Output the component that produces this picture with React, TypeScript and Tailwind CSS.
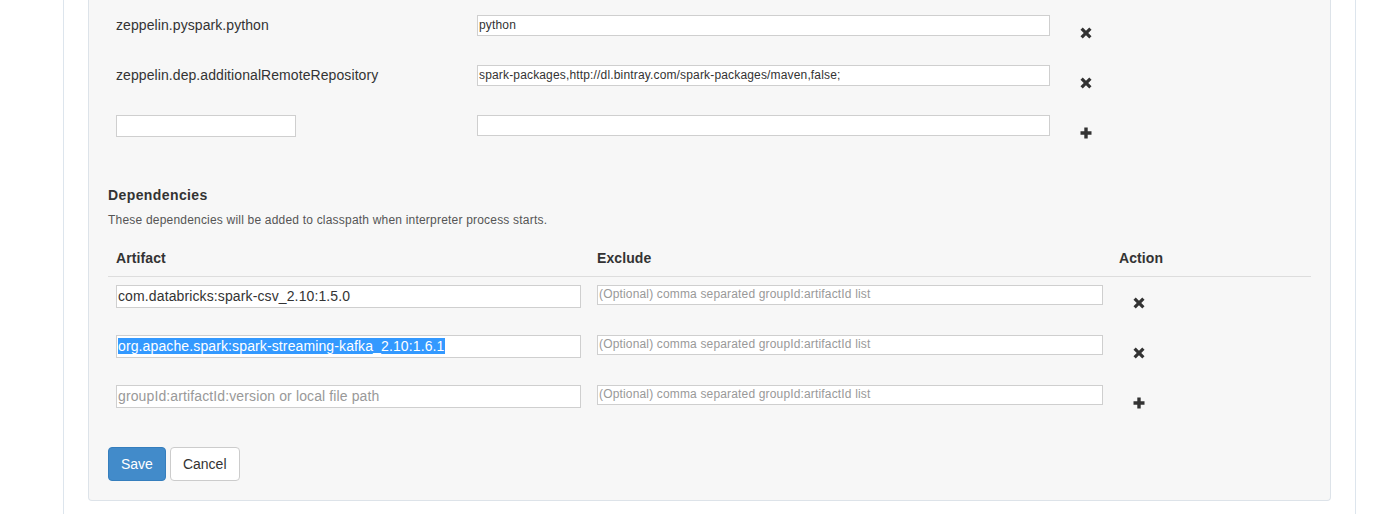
import React from "react";

const font = { fontFamily: '"Liberation Sans", Arial, Helvetica, sans-serif' };

function RemoveIcon() {
  return (
    <svg width="12" height="12" viewBox="0 0 12 12" className="block">
      <path d="M1.6 1.6 L10.4 10.4 M10.4 1.6 L1.6 10.4" stroke="#333" strokeWidth="3.2" strokeLinecap="butt" fill="none" />
    </svg>
  );
}

function PlusIcon() {
  return (
    <svg width="12" height="12" viewBox="0 0 12 12" className="block">
      <path d="M6 0.5 V11.5 M0.5 6 H11.5" stroke="#333" strokeWidth="3.4" fill="none" />
    </svg>
  );
}

function PropRow({ label, value, add }: { label?: string; value?: string; add?: boolean }) {
  return (
    <div className="flex h-[50px] pt-[15px]">
      <div className="w-[361px] pl-[8px] text-[14px] leading-[20px] tracking-[0.08px] text-[#333]">
        {label ? label : <div className="w-[180px] h-[22px] border border-[#cfcfcf] bg-white" />}
      </div>
      <div className="w-[589px] pl-[8px]">
        <div className="w-[573px] h-[21px] border border-[#cfcfcf] bg-white pl-[1px] text-[12px] leading-[19px] tracking-[0.16px] text-[#333]">
          {value}
        </div>
      </div>
      <div className="pl-[22px] pt-[12px]">{add ? <PlusIcon /> : <RemoveIcon />}</div>
    </div>
  );
}

function DepRow({
  artifact,
  selected,
  add,
}: {
  artifact?: string;
  selected?: boolean;
  add?: boolean;
}) {
  return (
    <div className="flex h-[50px] pt-[8px]">
      <div className="w-[481px] pl-[8px]">
        <div className="w-[465px] h-[23px] border border-[#cfcfcf] bg-white pl-[1px] text-[14px] leading-[21px] tracking-[0.12px] overflow-hidden whitespace-nowrap">
          {artifact ? (
            selected ? (
              <span className="bg-[#3399ff] text-white">{artifact}</span>
            ) : (
              <span className="text-[#333]">{artifact}</span>
            )
          ) : (
            <span className="text-[#999]">groupId:artifactId:version or local file path</span>
          )}
        </div>
      </div>
      <div className="w-[522px] pl-[8px]">
        <div className="w-[506px] h-[20px] border border-[#cfcfcf] bg-white pl-[1px] text-[12px] leading-[16px] tracking-[0.16px] text-[#999] whitespace-nowrap">
          (Optional) comma separated groupId:artifactId list
        </div>
      </div>
      <div className="pl-[22px] pt-[12px]">{add ? <PlusIcon /> : <RemoveIcon />}</div>
    </div>
  );
}

export default function App() {
  return (
    <div className="w-[1398px] h-[514px] bg-white overflow-hidden" style={font}>
      <div className="ml-[63px] w-[1293px] h-[514px] border-x border-[#dde5ed] px-[24px]">
        <div className="bg-[#f7f7f7] border-x border-b border-[#dde3e9] rounded-b-[4px] px-[19px] pb-[19px]">
          <PropRow label="zeppelin.pyspark.python" value="python" />
          <PropRow
            label="zeppelin.dep.additionalRemoteRepository"
            value="spark-packages,http://dl.bintray.com/spark-packages/maven,false;"
          />
          <PropRow add />

          <div className="mt-[35px] text-[14px] leading-[20px] font-bold tracking-[0.4px] text-[#333]">Dependencies</div>
          <div className="mt-[7px] text-[12px] leading-[17px] tracking-[0.2px] text-[#555]">
            These dependencies will be added to classpath when interpreter process starts.
          </div>

          <div className="mt-[11px] flex border-b border-[#dddddd] py-[8px] text-[14px] leading-[20px] font-bold tracking-[0.1px] text-[#333]">
            <div className="w-[481px] pl-[8px]">Artifact</div>
            <div className="w-[522px] pl-[8px]">Exclude</div>
            <div className="pl-[8px]">Action</div>
          </div>

          <DepRow artifact="com.databricks:spark-csv_2.10:1.5.0" />
          <DepRow artifact="org.apache.spark:spark-streaming-kafka_2.10:1.6.1" selected />
          <DepRow add />

          <div className="mt-[20px] flex gap-[4px]">
            <button className="h-[34px] px-[12px] rounded-[4px] bg-[#428bca] border border-[#357ebd] text-white text-[14px]">
              Save
            </button>
            <button className="h-[34px] px-[12px] rounded-[4px] bg-white border border-[#cccccc] text-[#333] text-[14px]">
              Cancel
            </button>
          </div>
        </div>
      </div>
    </div>
  );
}
